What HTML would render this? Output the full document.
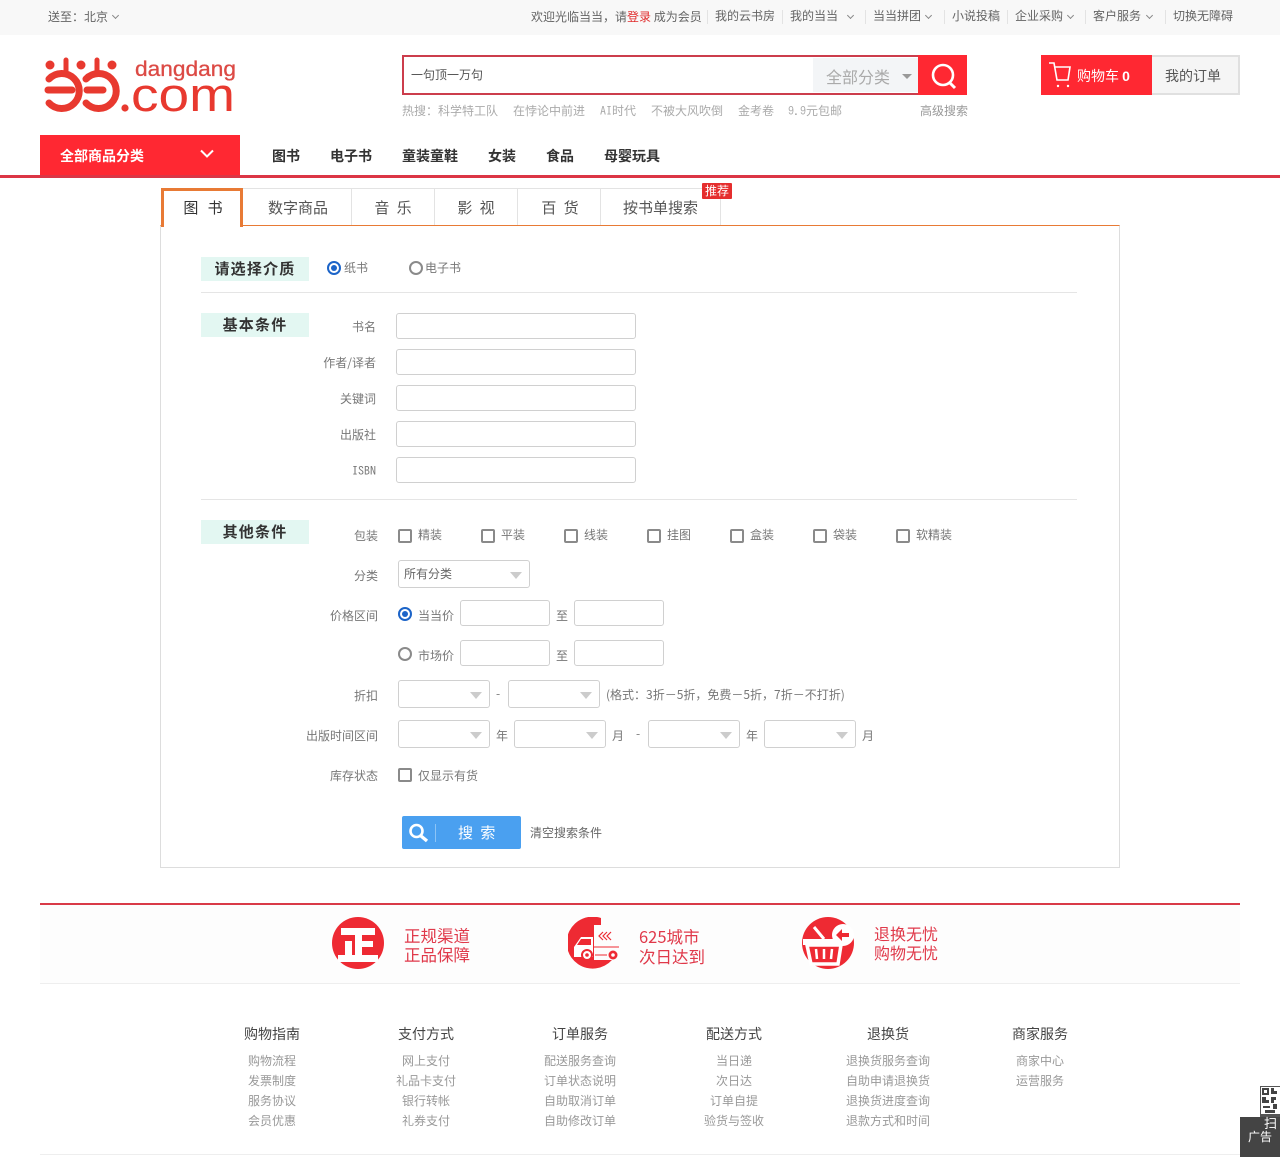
<!DOCTYPE html>
<html lang="zh"><head><meta charset="utf-8"><title>高级搜索</title>
<style>
*{box-sizing:border-box;margin:0;padding:0}
html,body{width:1280px;height:1167px;overflow:hidden;background:#fff}
body{position:relative;font:12px/20px "WenQuanYi Zen Hei","Noto Sans CJK SC",sans-serif;color:#646464}
.m{font-family:"IPAGothic","WenQuanYi Zen Hei",monospace}
.t{position:absolute;white-space:nowrap;height:20px;line-height:20px}
.r{position:absolute;white-space:nowrap;text-align:right;width:100px;height:20px;line-height:20px;color:#777;margin-top:1px}
.c{position:absolute;white-space:nowrap;text-align:center;width:150px;height:20px;line-height:20px;color:#999;margin-top:1px}
.b{position:absolute}
.i{position:absolute;background:#fff;border:1px solid #d0d0d0;border-radius:3px}
.i.a:after{content:"";position:absolute;right:7px;top:11px;border:6px solid transparent;border-top:7px solid #ccc;border-bottom:0}
.ck{position:absolute;width:14px;height:14px;border:2px solid #8a8a8a;border-radius:2px;background:#fff}
.ra{position:absolute;width:14px;height:14px;border:2px solid #8a8a8a;border-radius:50%;background:#fff}
.ra.on{border-color:#1c64c8}
.ra.on:after{content:"";position:absolute;left:2px;top:2px;width:6px;height:6px;border-radius:50%;background:#1c64c8}
.tag{position:absolute;left:201px;width:108px;height:24px;line-height:23px;background:#e3f7f2;color:#333;font-size:15px;font-weight:bold;text-align:center;letter-spacing:1.2px}
.tab{position:absolute;top:198px;height:20px;line-height:20px;font-size:15px;color:#555;text-align:center;white-space:nowrap}
.nav{position:absolute;top:146px;height:20px;line-height:20px;font-size:14px;font-weight:bold;color:#333;white-space:nowrap}
.sep{position:absolute;width:1px;background:#e3e3e3}
.ch{position:absolute;width:5px;height:5px;border-right:1px solid #888;border-bottom:1px solid #888;transform:rotate(45deg)}
.red{position:absolute;color:#e0394a;font-size:16.5px;line-height:20px;height:20px;white-space:nowrap}
.h{position:absolute;white-space:nowrap;text-align:center;width:150px;height:20px;line-height:20px;color:#444;font-size:14px;margin-top:1px}
</style></head><body>

<div class="b" style="left:0;top:0;width:1280px;height:35px;background:#f8f8f8"></div>
<div class="t" style="left:48px;top:7px">送至：北京</div><div class="ch" style="left:113px;top:13px;width:5px;height:5px"></div>
<div class="t" style="left:531px;top:7px">欢迎光临当当，请<span style="color:#e02b2b">登录</span> 成为会员</div>
<div class="sep" style="left:707px;top:10px;height:14px"></div>
<div class="t" style="left:715px;top:6px">我的云书房</div>
<div class="sep" style="left:782px;top:10px;height:14px"></div>
<div class="t" style="left:790px;top:6px">我的当当</div><div class="ch" style="left:848px;top:13px"></div>
<div class="sep" style="left:865px;top:10px;height:14px"></div>
<div class="t" style="left:873px;top:6px">当当拼团</div><div class="ch" style="left:926px;top:13px"></div>
<div class="sep" style="left:944px;top:10px;height:14px"></div>
<div class="t" style="left:952px;top:6px">小说投稿</div>
<div class="sep" style="left:1007px;top:10px;height:14px"></div>
<div class="t" style="left:1015px;top:6px">企业采购</div><div class="ch" style="left:1068px;top:13px"></div>
<div class="sep" style="left:1085px;top:10px;height:14px"></div>
<div class="t" style="left:1093px;top:6px">客户服务</div><div class="ch" style="left:1147px;top:13px"></div>
<div class="sep" style="left:1165px;top:10px;height:14px"></div>
<div class="t" style="left:1173px;top:6px">切换无障碍</div>

<svg class="b" style="left:40px;top:50px" width="200" height="70" viewBox="40 50 200 70">
<g fill="none" stroke="#e8392f" stroke-width="7" stroke-linecap="round">
<path d="M49 79A17.500 17.500 0 1 1 49 103"/>
<path d="M48 90H72"/>
<path d="M86 79A17.500 17.500 0 1 1 86 103"/>
<path d="M87 90H103"/>
</g>
<path d="M66 60V72M97 60V72" fill="none" stroke="#e8392f" stroke-width="5" stroke-linecap="round"/>
<g fill="#e8392f"><circle cx="50" cy="65" r="4.500"/><circle cx="81" cy="65" r="4.500"/><circle cx="112" cy="65" r="4.500"/><circle cx="125" cy="108" r="3.600"/></g>
<text x="135" y="76" font-family="Liberation Sans" font-size="21.5" fill="#dc4a45" textLength="101" lengthAdjust="spacingAndGlyphs" stroke="#dc4a45" stroke-width=".3">dangdang</text>
<text x="131" y="111" font-family="Liberation Sans" font-size="47" fill="#e8392f" textLength="104" lengthAdjust="spacingAndGlyphs">com</text>
</svg>

<div class="b" style="left:402px;top:55px;width:565px;height:40px;border:2px solid #cc3d4c;background:#fff"></div>
<div class="t" style="left:411px;top:65px;color:#555">一句顶一万句</div>
<div class="b" style="left:813px;top:58px;width:105px;height:34px;background:#f3f5f7"></div>
<div class="t" style="left:826px;top:66px;font-size:16px;color:#aaa">全部分类</div>
<div class="b" style="left:902px;top:74px;border:5px solid transparent;border-top:5px solid #999;border-bottom:0"></div>
<div class="b" style="left:918px;top:55px;width:49px;height:40px;background:#ff2832"></div>
<svg class="b" style="left:928px;top:61px" width="30" height="30" viewBox="0 0 30 30" fill="none" stroke="#fff"><circle cx="15" cy="14" r="10" stroke-width="2.600"/><path d="M21 21l6 6" stroke-width="3"/></svg>

<div class="t" style="left:402px;top:101px;color:#aaa">热搜：科学特工队</div>
<div class="t" style="left:513px;top:101px;color:#aaa">在悖论中前进</div>
<div class="t" style="left:600px;top:101px;color:#aaa"><span class="m">AI</span>时代</div>
<div class="t" style="left:651px;top:101px;color:#aaa">不被大风吹倒</div>
<div class="t" style="left:738px;top:101px;color:#aaa">金考卷</div>
<div class="t" style="left:788px;top:101px;color:#aaa"><span class="m">9.9</span>元包邮</div>
<div class="t" style="left:920px;top:101px;color:#999">高级搜索</div>

<div class="b" style="left:1041px;top:55px;width:111px;height:40px;background:#ff2832"></div>
<svg class="b" style="left:1048px;top:60px" width="26" height="30" viewBox="0 0 26 30" fill="none" stroke="#fff" stroke-width="1.600"><path d="M1 3h5l3 17h11l2-13H7"/><circle cx="10" cy="26" r="1.200" fill="#fff" stroke="none"/><circle cx="20" cy="26" r="1.200" fill="#fff" stroke="none"/></svg>
<div class="t" style="left:1077px;top:66px;color:#fff;font-size:14px">购物车 <b style="font-family:'Liberation Sans',sans-serif">0</b></div>
<div class="b" style="left:1152px;top:55px;width:88px;height:40px;background:#f5f5f5;border:2px solid #e0e0e0;border-left:0"></div>
<div class="t" style="left:1165px;top:66px;font-size:14px;color:#555">我的订单</div>

<div class="b" style="left:40px;top:135px;width:200px;height:41px;background:#ff2832"></div>
<div class="t" style="left:60px;top:146px;color:#fff;font-size:14px;font-weight:bold">全部商品分类</div>
<svg class="b" style="left:200px;top:149px" width="14" height="10" viewBox="0 0 14 10" fill="none" stroke="#fff" stroke-width="2"><path d="M1 1.500l6 6 6-6"/></svg>
<div class="b" style="left:0;top:175px;width:1280px;height:3px;background:#dc3545"></div>
<div class="nav" style="left:272px">图书</div>
<div class="nav" style="left:330px">电子书</div>
<div class="nav" style="left:402px">童装童鞋</div>
<div class="nav" style="left:488px">女装</div>
<div class="nav" style="left:546px">食品</div>
<div class="nav" style="left:604px">母婴玩具</div>

<div class="b" style="left:160px;top:225px;width:960px;height:643px;border:1px solid #ddd;border-top:1px solid #e87a35"></div>
<div class="b" style="left:243px;top:188px;width:478px;height:37px;border-top:1px solid #e3e3e3;border-right:1px solid #e3e3e3"></div>
<div class="sep" style="left:351px;top:189px;height:36px"></div>
<div class="sep" style="left:434px;top:189px;height:36px"></div>
<div class="sep" style="left:517px;top:189px;height:36px"></div>
<div class="sep" style="left:600px;top:189px;height:36px"></div>
<div class="b" style="left:161px;top:188px;width:82px;height:39px;background:#fff;border:3px solid #e87a35;border-bottom:0"></div>
<div class="tab" style="left:183px;width:40px;color:#333;word-spacing:6px">图 书</div>
<div class="tab" style="left:268px;width:60px">数字商品</div>
<div class="tab" style="left:373px;width:40px;word-spacing:4px">音 乐</div>
<div class="tab" style="left:456px;width:40px;word-spacing:4px">影 视</div>
<div class="tab" style="left:540px;width:40px;word-spacing:4px">百 货</div>
<div class="tab" style="left:623px;width:75px">按书单搜索</div>
<div class="t" style="left:702px;top:183px;width:30px;height:16px;line-height:16px;background:#e52e2e;color:#fff;text-align:center;border-radius:1px">推荐</div>

<div class="tag" style="top:257px">请选择介质</div>
<div class="ra on" style="left:327px;top:261px"></div><div class="t" style="left:344px;top:258px;color:#777">纸书</div>
<div class="ra" style="left:409px;top:261px"></div><div class="t" style="left:425px;top:258px;color:#777">电子书</div>
<div class="b" style="left:201px;top:292px;width:876px;height:1px;background:#e5e5e5"></div>

<div class="tag" style="top:313px">基本条件</div>
<div class="r" style="left:276px;top:316px">书名</div><div class="i" style="left:396px;top:313px;width:240px;height:26px"></div>
<div class="r" style="left:276px;top:352px">作者/译者</div><div class="i" style="left:396px;top:349px;width:240px;height:26px"></div>
<div class="r" style="left:276px;top:388px">关键词</div><div class="i" style="left:396px;top:385px;width:240px;height:26px"></div>
<div class="r" style="left:276px;top:424px">出版社</div><div class="i" style="left:396px;top:421px;width:240px;height:26px"></div>
<div class="r m" style="left:276px;top:460px">ISBN</div><div class="i" style="left:396px;top:457px;width:240px;height:26px"></div>
<div class="b" style="left:201px;top:499px;width:876px;height:1px;background:#e5e5e5"></div>

<div class="tag" style="top:520px">其他条件</div>
<div class="r" style="left:278px;top:525px">包装</div>
<div class="ck" style="left:398px;top:529px"></div><div class="t" style="left:418px;top:525px;color:#777">精装</div>
<div class="ck" style="left:481px;top:529px"></div><div class="t" style="left:501px;top:525px;color:#777">平装</div>
<div class="ck" style="left:564px;top:529px"></div><div class="t" style="left:584px;top:525px;color:#777">线装</div>
<div class="ck" style="left:647px;top:529px"></div><div class="t" style="left:667px;top:525px;color:#777">挂图</div>
<div class="ck" style="left:730px;top:529px"></div><div class="t" style="left:750px;top:525px;color:#777">盒装</div>
<div class="ck" style="left:813px;top:529px"></div><div class="t" style="left:833px;top:525px;color:#777">袋装</div>
<div class="ck" style="left:896px;top:529px"></div><div class="t" style="left:916px;top:525px;color:#777">软精装</div>

<div class="r" style="left:278px;top:565px">分类</div>
<div class="i a" style="left:398px;top:560px;width:132px;height:28px"></div><div class="t" style="left:404px;top:564px;color:#666">所有分类</div>

<div class="r" style="left:278px;top:605px">价格区间</div>
<div class="ra on" style="left:398px;top:607px"></div><div class="t" style="left:418px;top:606px;color:#777">当当价</div>
<div class="i" style="left:460px;top:600px;width:90px;height:26px"></div><div class="t" style="left:556px;top:606px;color:#777">至</div><div class="i" style="left:574px;top:600px;width:90px;height:26px"></div>
<div class="ra" style="left:398px;top:647px"></div><div class="t" style="left:418px;top:646px;color:#777">市场价</div>
<div class="i" style="left:460px;top:640px;width:90px;height:26px"></div><div class="t" style="left:556px;top:646px;color:#777">至</div><div class="i" style="left:574px;top:640px;width:90px;height:26px"></div>

<div class="r" style="left:278px;top:685px">折扣</div>
<div class="i a" style="left:398px;top:680px;width:92px;height:28px"></div><div class="t" style="left:496px;top:684px;color:#777">-</div><div class="i a" style="left:508px;top:680px;width:92px;height:28px"></div>
<div class="t" style="left:606px;top:685px;color:#777">(格式：3折－5折，免费－5折，7折－不打折)</div>

<div class="r" style="left:278px;top:725px">出版时间区间</div>
<div class="i a" style="left:398px;top:720px;width:92px;height:28px"></div><div class="t" style="left:496px;top:726px;color:#777">年</div>
<div class="i a" style="left:514px;top:720px;width:92px;height:28px"></div><div class="t" style="left:612px;top:726px;color:#777">月</div>
<div class="t" style="left:636px;top:724px;color:#777">-</div>
<div class="i a" style="left:648px;top:720px;width:92px;height:28px"></div><div class="t" style="left:746px;top:726px;color:#777">年</div>
<div class="i a" style="left:764px;top:720px;width:92px;height:28px"></div><div class="t" style="left:862px;top:726px;color:#777">月</div>

<div class="r" style="left:278px;top:765px">库存状态</div>
<div class="ck" style="left:398px;top:768px"></div><div class="t" style="left:418px;top:766px;color:#777">仅显示有货</div>

<div class="b" style="left:402px;top:816px;width:119px;height:33px;background:#4aa0f0;border-radius:2px"></div>
<div class="b" style="left:435px;top:824px;width:1px;height:18px;background:#8cc4f6"></div>
<svg class="b" style="left:407px;top:822px" width="24" height="22" viewBox="0 0 24 22" fill="none" stroke="#fff"><circle cx="9.500" cy="9" r="6" stroke-width="2.600"/><path d="M14 14l6 5" stroke-width="3.400"/></svg>
<div class="t" style="left:458px;top:823px;color:#fff;font-size:15px;word-spacing:4px">搜 索</div>
<div class="t" style="left:530px;top:823px;color:#666">清空搜索条件</div>

<div class="b" style="left:40px;top:903px;width:1200px;height:81px;background:#fdfdfd;border-top:2px solid #d93a48;border-bottom:1px solid #eee"></div>
<svg class="b" style="left:332px;top:917px" width="52" height="52" viewBox="0 0 52 52"><circle cx="26" cy="26" r="26" fill="#ee2a33"/><path d="M9 11H43V18H30V24H41V30H30V38H46V45H6V38H13V24H20V38H23V18H9Z" fill="#fff"/></svg>
<svg class="b" style="left:568px;top:917px" width="52" height="52" viewBox="0 0 52 52"><path d="M33 1A26 26 0 1 0 44 43H26V8H33Z" fill="#ee2a33"/><path d="M6 40V30L13 20H25V40Z" fill="#fff"/><path d="M13 22H23V28H9Z" fill="#ee2a33"/><circle cx="19" cy="38" r="5" fill="#fff" stroke="#ee2a33" stroke-width="2"/><circle cx="19" cy="38" r="1.800" fill="#ee2a33"/><circle cx="45" cy="38" r="4.500" fill="#ee2a33"/><circle cx="45" cy="38" r="1.800" fill="#fff"/><path d="M25 30H51M27 38H39" stroke="#ee2a33" stroke-width="1" fill="none"/><path d="M35 15l-4 4 4 4M39 15l-4 4 4 4M43 15l-4 4 4 4" stroke="#ee2a33" stroke-width="1.200" fill="none"/></svg>
<svg class="b" style="left:802px;top:917px" width="52" height="52" viewBox="0 0 52 52"><circle cx="26" cy="26" r="26" fill="#ee2a33"/><rect x="1" y="22" width="39" height="6" fill="#fff"/><path d="M5 28H39L36 47H9Z" fill="none" stroke="#fff" stroke-width="3.500"/><path d="M14 32l1 10M22 32v10M30 32l-1 10" stroke="#fff" stroke-width="2.500"/><path d="M12 10l10 12" stroke="#fff" stroke-width="3"/><circle cx="41" cy="18" r="11" fill="#fff"/><path d="M34 18l6-6v4h7v4h-7v4Z" fill="#ee2a33"/></svg>

<div class="red" style="left:404px;top:925px">正规渠道</div>
<div class="red" style="left:404px;top:944px">正品保障</div>
<div class="red" style="left:639px;top:926px">625城市</div>
<div class="red" style="left:639px;top:946px">次日达到</div>
<div class="red" style="left:874px;top:923px;font-size:16px">退换无忧</div>
<div class="red" style="left:874px;top:942px;font-size:16px">购物无忧</div>

<div class="h" style="left:197px;top:1023px">购物指南</div>
<div class="c" style="left:197px;top:1050px">购物流程</div><div class="c" style="left:197px;top:1070px">发票制度</div><div class="c" style="left:197px;top:1090px">服务协议</div><div class="c" style="left:197px;top:1110px">会员优惠</div>
<div class="h" style="left:351px;top:1023px">支付方式</div>
<div class="c" style="left:351px;top:1050px">网上支付</div><div class="c" style="left:351px;top:1070px">礼品卡支付</div><div class="c" style="left:351px;top:1090px">银行转帐</div><div class="c" style="left:351px;top:1110px">礼券支付</div>
<div class="h" style="left:505px;top:1023px">订单服务</div>
<div class="c" style="left:505px;top:1050px">配送服务查询</div><div class="c" style="left:505px;top:1070px">订单状态说明</div><div class="c" style="left:505px;top:1090px">自助取消订单</div><div class="c" style="left:505px;top:1110px">自助修改订单</div>
<div class="h" style="left:659px;top:1023px">配送方式</div>
<div class="c" style="left:659px;top:1050px">当日递</div><div class="c" style="left:659px;top:1070px">次日达</div><div class="c" style="left:659px;top:1090px">订单自提</div><div class="c" style="left:659px;top:1110px">验货与签收</div>
<div class="h" style="left:813px;top:1023px">退换货</div>
<div class="c" style="left:813px;top:1050px">退换货服务查询</div><div class="c" style="left:813px;top:1070px">自助申请退换货</div><div class="c" style="left:813px;top:1090px">退换货进度查询</div><div class="c" style="left:813px;top:1110px">退款方式和时间</div>
<div class="h" style="left:965px;top:1023px">商家服务</div>
<div class="c" style="left:965px;top:1050px">商家中心</div><div class="c" style="left:965px;top:1070px">运营服务</div>

<div class="b" style="left:40px;top:1154px;width:1200px;height:1px;background:#eee"></div>

<svg class="b" style="left:1260px;top:1086px" width="20" height="31" viewBox="0 0 20 31"><rect width="20" height="31" fill="#555"/><rect x="1" y="1" width="19" height="27" fill="#fff"/><path d="M2 2h7v7H2ZM4 4v3h3V4ZM11 2h3v3h3v3h-6ZM2 11h4v3h3v3H2ZM11 11h5v3h-2v3h-3ZM3 20h7v2H3ZM13 18h4v5h-4ZM5 24h10v3H5Z" fill="#444" fill-rule="evenodd"/></svg>
<div class="b" style="left:1240px;top:1117px;width:40px;height:40px;background:#444"></div>
<div class="t" style="left:1248px;top:1127px;color:#fff">广告</div>
<div class="t" style="left:1264px;top:1113px;color:#fff;width:16px;overflow:hidden;font-size:13px">扫</div>
</body></html>
